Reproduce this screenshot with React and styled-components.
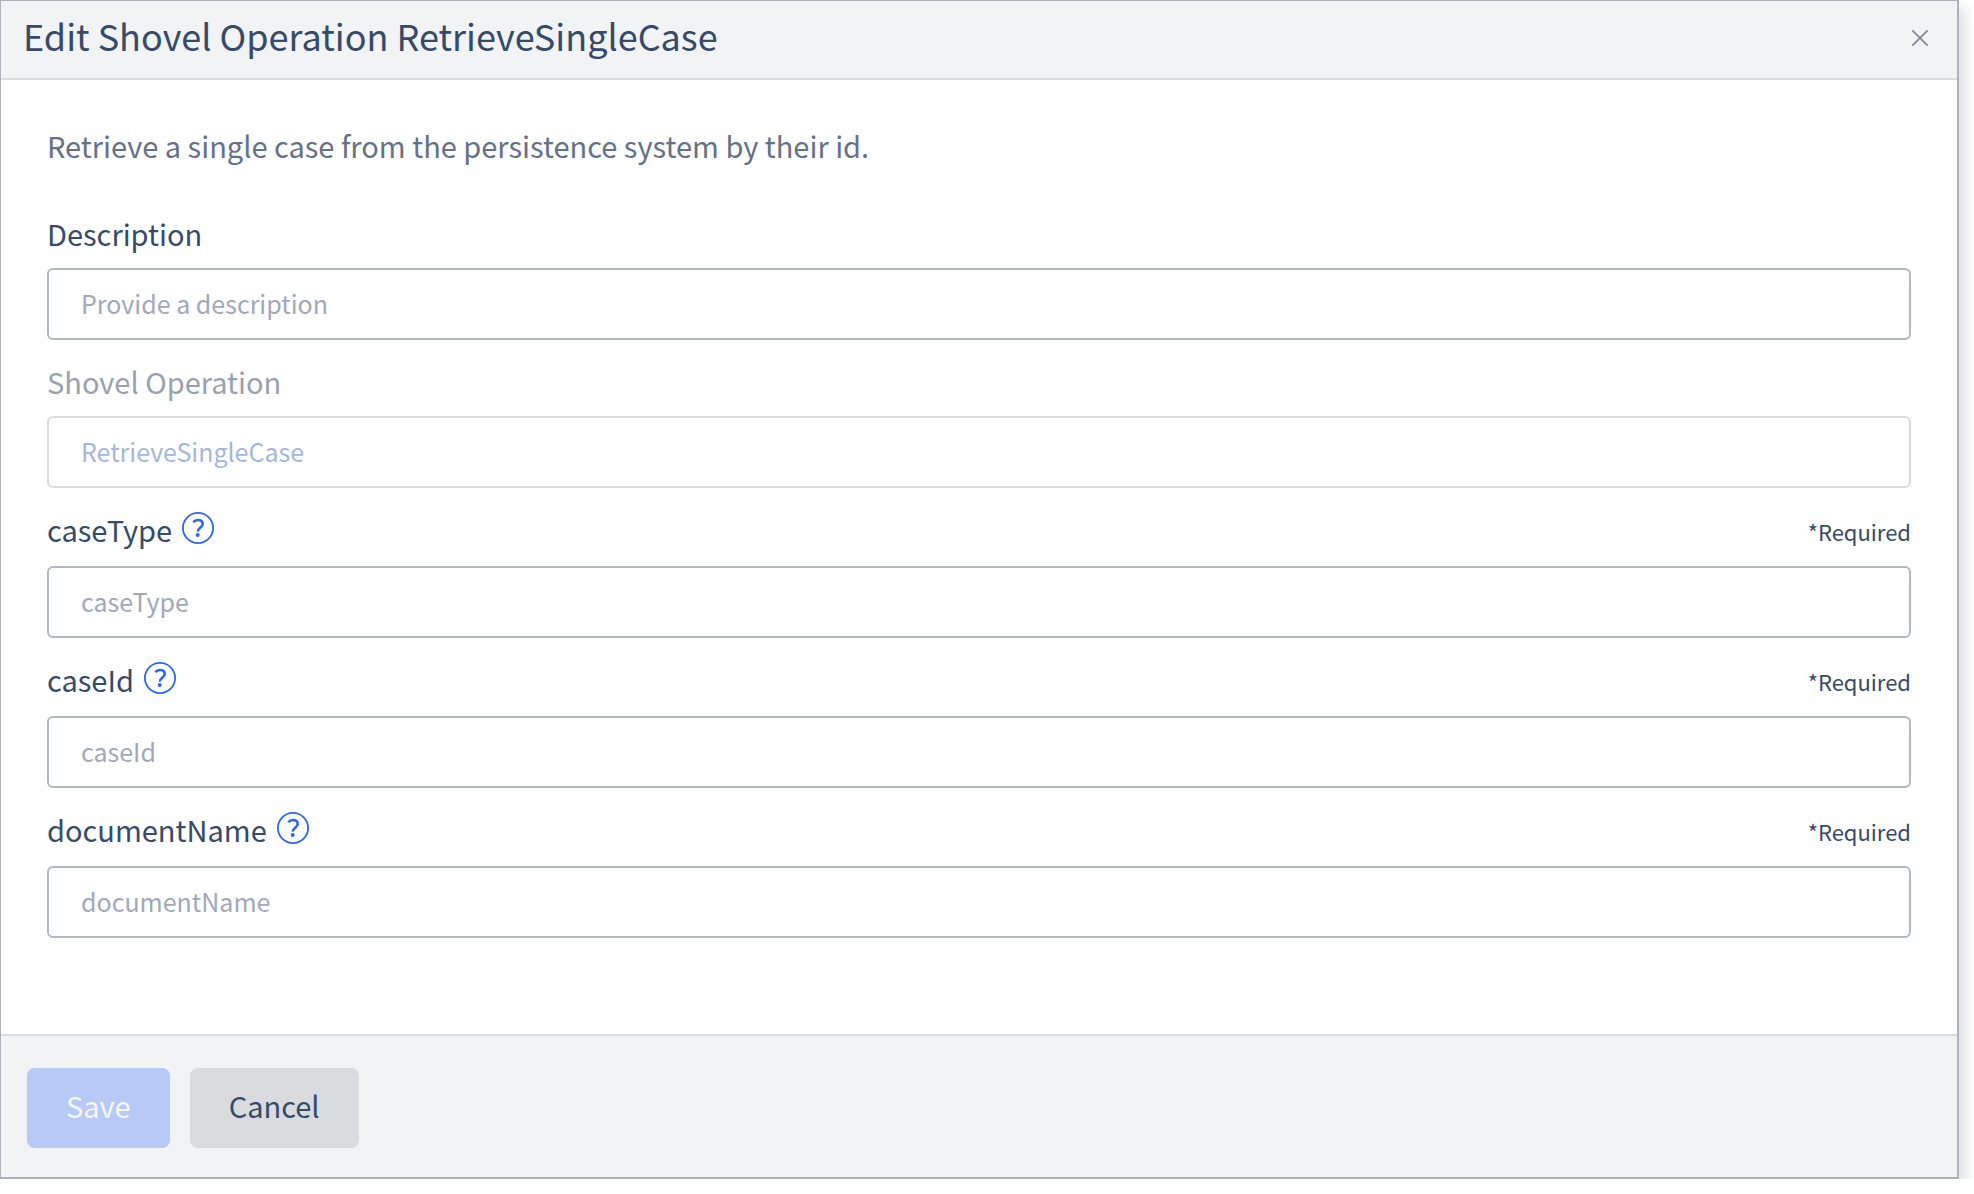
import { useState } from "react"
import styled, { createGlobalStyle, ThemeProvider } from "styled-components"

const theme = {
  colors: {
    text: "#364a69",
    muted: "#647189",
    disabled: "#98a1b1",
    placeholder: "#a0a8ba",
    value: "#a3b7dc",
    link: "#2c66f0",
    panel: "#f2f3f5",
    line: "#dadcdf",
    inputBorder: "#b2b8bd",
    frame: "#b0b0b9",
  },
  sizes: {
    title: "36px",
    body: "29px",
    input: "25px",
    small: "22px",
  },
}

const GlobalStyle = createGlobalStyle`
  * {
    box-sizing: border-box;
  }

  body {
    margin: 0;
    background: #fff;
    font-family: "Source Sans Pro", "Noto Sans CJK SC", sans-serif;
    color: ${theme.colors.text};
  }
`

const Dialog = styled.section`
  margin-right: 15px;
  border: 2px solid ${({ theme }) => theme.colors.frame};
  border-width: 1px 2px 2px 1px;
  background: #fff;
  box-shadow: 8px 8px 10px rgba(60, 70, 95, 0.14);
`

const Header = styled.header`
  display: flex;
  align-items: center;
  justify-content: space-between;
  padding: 8px 27px 9px 22px;
  border-bottom: 2px solid ${({ theme }) => theme.colors.line};
  background: ${({ theme }) => theme.colors.panel};
`

const Title = styled.h1`
  margin: 0;
  padding-bottom: 8px;
  font-size: ${({ theme }) => theme.sizes.title};
  font-weight: 400;
  line-height: 52px;
`

const CloseButton = styled.button`
  display: flex;
  padding: 0 0 2px;
  border: none;
  background: none;
  color: #858b94;
  cursor: pointer;
`

const Form = styled.form`
  margin: 0;
`

const Body = styled.div`
  padding: 43px 46px 96px;
`

const Intro = styled.p`
  margin: 0 0 41px;
  color: ${({ theme }) => theme.colors.muted};
  font-size: ${({ theme }) => theme.sizes.body};
  line-height: 44px;
`

const Field = styled.div`
  margin-top: 16px;
`

const LabelRow = styled.div`
  display: flex;
  align-items: flex-start;
  gap: 10px;
  min-height: 60px;
  padding: 8px 0;
`

const Label = styled.label`
  color: ${({ theme, $disabled }) => ($disabled ? theme.colors.disabled : theme.colors.text)};
  font-size: ${({ theme }) => theme.sizes.body};
  line-height: 34px;
`

const HelpButton = styled.button`
  display: flex;
  padding: 0 0 14px;
  border: none;
  background: none;
  color: ${({ theme }) => theme.colors.link};
  cursor: pointer;
`

const Required = styled.span`
  margin-left: auto;
  font-size: ${({ theme }) => theme.sizes.small};
  line-height: 38px;
`

const TextInput = styled.input`
  display: block;
  width: 100%;
  height: 72px;
  padding: 0 32px 2px;
  border: 2px solid ${({ theme }) => theme.colors.inputBorder};
  border-radius: 6px;
  background: #fff;
  color: ${({ theme }) => theme.colors.text};
  font-family: inherit;
  font-size: ${({ theme }) => theme.sizes.input};

  &::placeholder {
    color: ${({ theme }) => theme.colors.placeholder};
    opacity: 1;
  }

  &:disabled {
    border-color: ${({ theme }) => theme.colors.line};
    color: ${({ theme }) => theme.colors.value};
  }
`

const Footer = styled.footer`
  display: flex;
  gap: 20px;
  padding: 32px 26px 29px;
  border-top: 2px solid ${({ theme }) => theme.colors.line};
  background: ${({ theme }) => theme.colors.panel};
`

const Button = styled.button`
  height: 80px;
  padding: 0 39px 6px;
  border: none;
  border-radius: 8px;
  background: ${({ $primary }) => ($primary ? "#b8c9f5" : "#dadbdf")};
  color: ${({ theme, $primary }) => ($primary ? "#f5f7fc" : theme.colors.text)};
  font-family: inherit;
  font-size: ${({ theme }) => theme.sizes.body};
  cursor: pointer;

  &:disabled {
    cursor: default;
  }
`

const CloseIcon = () => (
  <svg width="20" height="20" viewBox="0 0 20 20" fill="none" stroke="currentColor" strokeWidth="1.8" aria-hidden="true">
    <path d="M2.3 2.3 17.7 17.7M17.7 2.3 2.3 17.7" />
  </svg>
)

const HelpIcon = () => (
  <svg width="32" height="32" viewBox="0 0 32 32" fill="none" stroke="currentColor" aria-hidden="true">
    <circle cx="16" cy="16" r="15.1" strokeWidth="1.8" />
    <path d="M11.3 10.3C12.4 8.8 14 8 15.9 8c2.9 0 4.8 1.6 4.8 4 0 3.6-5.1 3.9-4.9 7.6" strokeWidth="2.6" />
    <circle cx="15.7" cy="22.9" r="2" fill="currentColor" stroke="none" />
  </svg>
)

const fields = [
  { id: "description", label: "Description", placeholder: "Provide a description" },
  { id: "operation", label: "Shovel Operation", disabled: true },
  { id: "caseType", label: "caseType", placeholder: "caseType", required: true },
  { id: "caseId", label: "caseId", placeholder: "caseId", required: true },
  { id: "documentName", label: "documentName", placeholder: "documentName", required: true },
]

const FormField = ({ id, label, placeholder, disabled, required, value, onChange }) => (
  <Field>
    <LabelRow>
      <Label htmlFor={id} $disabled={disabled}>{label}</Label>
      {required && (
        <>
          <HelpButton type="button" aria-label={`Help for ${label}`}>
            <HelpIcon />
          </HelpButton>
          <Required>*Required</Required>
        </>
      )}
    </LabelRow>
    <TextInput
      id={id}
      type="text"
      placeholder={placeholder}
      disabled={disabled}
      required={required}
      value={value}
      onChange={onChange}
    />
  </Field>
)

const App = () => {
  const [values, setValues] = useState({ operation: "RetrieveSingleCase" })

  const handleChange = (id) => (event) => {
    setValues({ ...values, [id]: event.target.value })
  }

  const canSave = fields.filter((field) => field.required).every((field) => values[field.id])

  return (
    <ThemeProvider theme={theme}>
      <GlobalStyle />
      <Dialog role="dialog" aria-labelledby="dialogTitle">
        <Header>
          <Title id="dialogTitle">Edit Shovel Operation RetrieveSingleCase</Title>
          <CloseButton type="button" aria-label="Close">
            <CloseIcon />
          </CloseButton>
        </Header>
        <Form onSubmit={(event) => event.preventDefault()}>
          <Body>
            <Intro>Retrieve a single case from the persistence system by their id.</Intro>
            {fields.map((field) => (
              <FormField
                key={field.id}
                {...field}
                value={values[field.id] || ""}
                onChange={handleChange(field.id)}
              />
            ))}
          </Body>
          <Footer>
            <Button type="submit" $primary disabled={!canSave}>Save</Button>
            <Button type="button">Cancel</Button>
          </Footer>
        </Form>
      </Dialog>
    </ThemeProvider>
  )
}

export default App
